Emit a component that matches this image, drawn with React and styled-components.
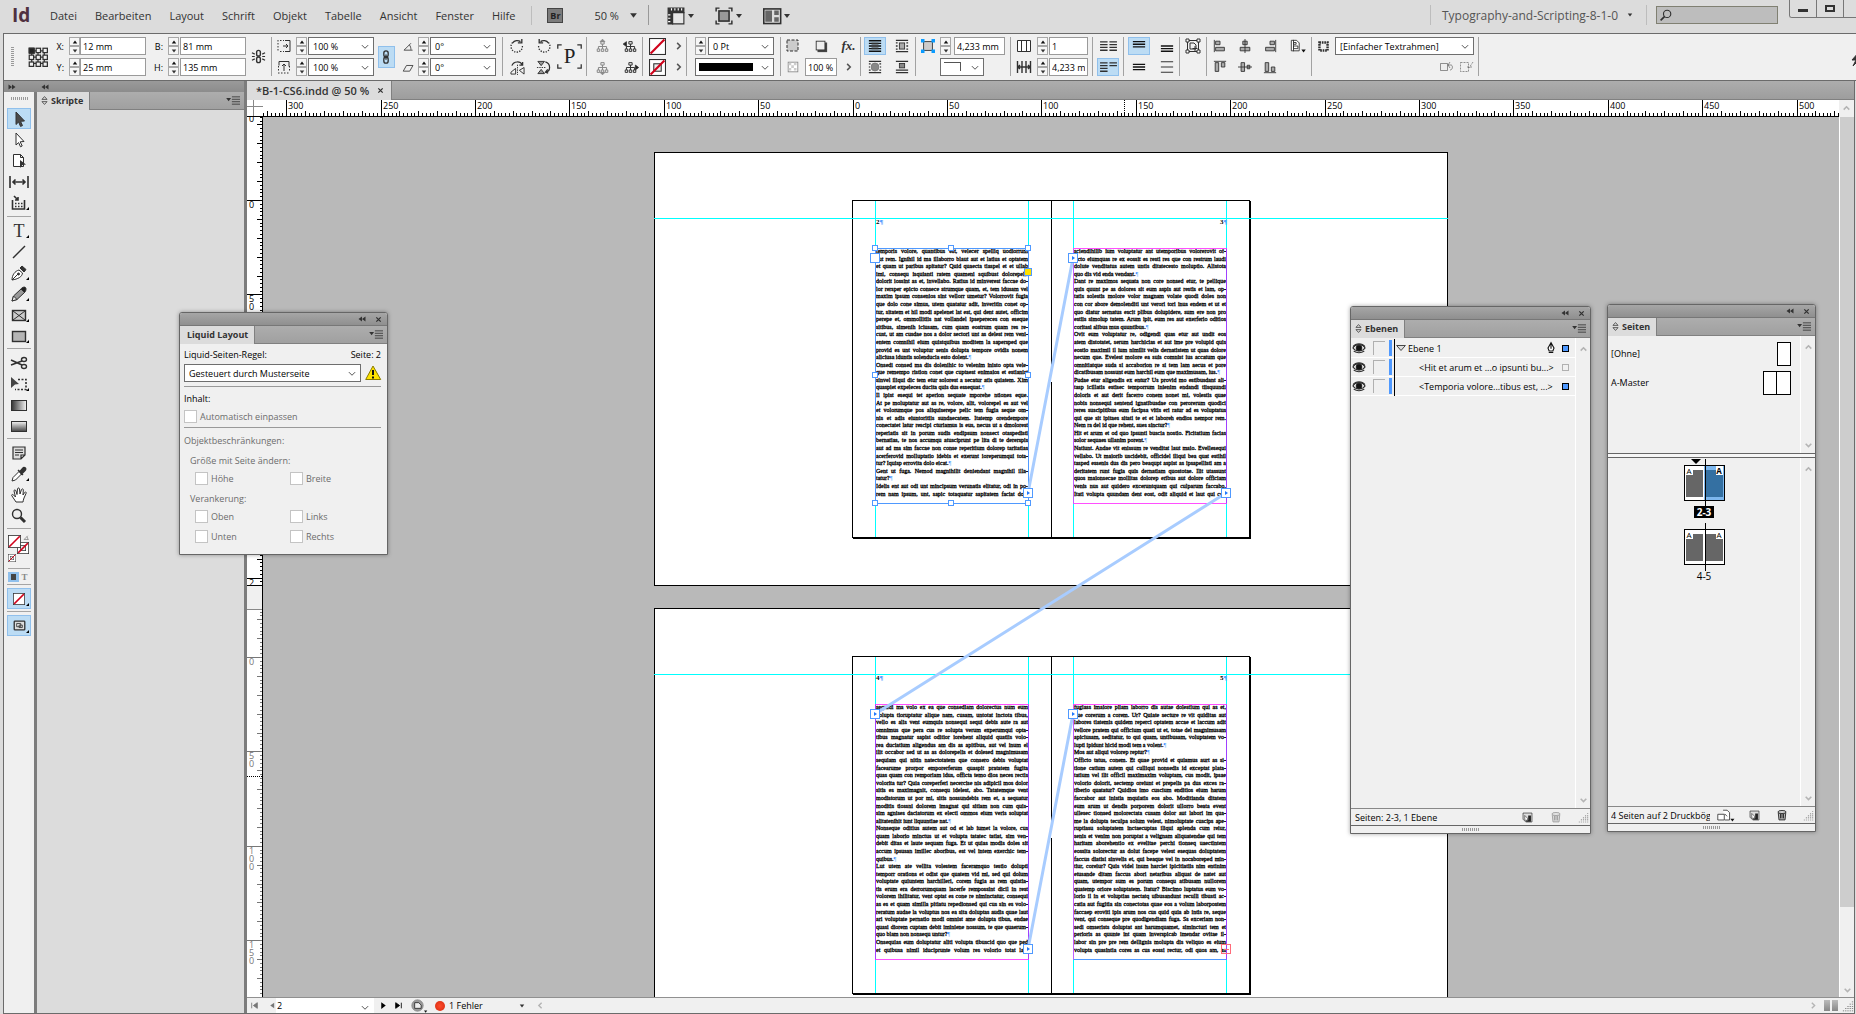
import React, { Fragment } from 'react';
import styled, { createGlobalStyle, css } from 'styled-components';

const GlobalStyle = createGlobalStyle`
  * {
    box-sizing: border-box;
  }
  body {
    margin: 0;
    background: #dcdcdc;
    color: #000;
    font-family: 'Open Sans', 'Noto Sans', sans-serif;
    font-size: 9px;
  }
  button, input, select {
    font: inherit;
    color: inherit;
    margin: 0;
  }
`;

/* ---------- icons ---------- */

const Svg = styled.svg`
  display: block;
  flex: none;
  fill: none;
  stroke: #303030;
`;

const tree = (
  <path d="M6 2h4v3H6zM8 5v3M3 11V8h10v3M8 8v3M1.500 11h3v3h-3zM6.500 11h3v3h-3zM11.500 11h3v3h-3z" strokeWidth="1.200" />
);

const icons = {
  select: <path d="M5 1l8.500 9-4 .3 2 4.300-2 .8-1.900-4.400L5 13.500z" fill="#4a4a4a" stroke="#333" />,
  direct: <path d="M5 1l8 8.500-3.800.3 2 4.200-1.700.8-1.900-4.200L5 13z" fill="#fff" />,
  page: (
    <>
      <path d="M2.500 1.500h7l3 3v9h-10zM9.500 1.500v3h3" fill="#fff" />
      <path d="M9 7l6 4.500-3.500.4L9 15z" fill="#333" stroke="none" />
    </>
  ),
  gap: <path d="M-1 2v12M17 2v12M2 8h12M4.500 5.500L2 8l2.500 2.500M11.500 5.500L14 8l-2.500 2.500" strokeWidth="1.600" />,
  collect: (
    <>
      <path d="M1.500 5v9h12V5M3 1l4 4M7 2v3H4" strokeWidth="1.600" />
      <path d="M4 8.500h8M4 11.500h8" strokeDasharray="1.500 1.500" strokeWidth="1.600" />
    </>
  ),
  line: <path d="M2 14L14 2" strokeWidth="1.400" />,
  pen: (
    <>
      <path d="M1 15c0-5 3-9 7-10l3.500 3C11 12 7 14 1 15zM1 15l6-6" fill="#fff" />
      <path d="M9 3l2-2 4 3.500-2 2.500z" fill="#333" />
      <circle cx="7.500" cy="9" r="1" fill="#333" />
    </>
  ),
  pencil: (
    <>
      <path d="M1 15l1.500-5L10 3l3.500 3.500L6 13.500z" fill="#999" />
      <path d="M10 3c1-2 5-3 5 0 0 2-1 3-1.500 3.500z" fill="#222" />
      <path d="M1 15l1.500-5L6 13.500z" fill="#eee" />
    </>
  ),
  frame: (
    <>
      <rect x="1.500" y="3.500" width="13" height="10" fill="#ccc" strokeWidth="1.400" />
      <path d="M2 4l12 9M14 4L2 13" />
    </>
  ),
  rect: <rect x="1.500" y="3.500" width="13" height="10" fill="#b5b5b5" strokeWidth="1.400" />,
  scissors: (
    <>
      <path d="M0 5l11 5M0 10l11-4" strokeWidth="1.600" />
      <ellipse cx="13" cy="4.500" rx="2.500" ry="2" strokeWidth="1.400" />
      <ellipse cx="13" cy="11.500" rx="2.500" ry="2" strokeWidth="1.400" />
    </>
  ),
  transform: (
    <>
      <path d="M0 1l8 7-4 .5L0 12z" fill="#444" stroke="none" />
      <path d="M7 3.500h8v10H4" strokeDasharray="2 1.500" strokeWidth="1.600" />
    </>
  ),
  gradient: <rect x="0.500" y="3.500" width="15" height="10" fill="url(#gradH)" />,
  feather: <rect x="0.500" y="3.500" width="15" height="10" fill="url(#gradV)" />,
  note: <path d="M2 2h12v8l-4 4H2zM10 14v-4h4M4 5h8M4 7.500h8M4 10h4" fill="#ddd" strokeWidth="1.200" />,
  dropper: (
    <>
      <path d="M1 15l1-3.500 6-6 2.500 2.500-6 6z" fill="#fff" />
      <path d="M7 4l5 5M9 5.500L12 2c1-1.500 4 0 2 2.500L10.500 8z" fill="#333" strokeWidth="1.400" />
    </>
  ),
  hand: (
    <path
      d="M5 15L1 9c-1-1.500.7-2 1.600-1L4.500 10 3 4c0-1.500 1.500-1.500 2 0l1 3.500L6.500 2c.3-1.400 1.700-1.400 2 0L9 7l1.500-4.500c.6-1 1.900-.7 1.800.5L12 8l1.600-2.500c.8-1 1.900-.3 1.600.6L13 11c-.5 1.500-1 3-1 4z"
      fill="#fff"
    />
  ),
  zoom: (
    <>
      <circle cx="6" cy="6" r="4.500" fill="#eee" strokeWidth="1.400" />
      <path d="M9.500 9.500L14 14" strokeWidth="3" />
    </>
  ),
  grid9: (
    <>
      <path d="M3 3h10v10H3zM8 3v10M3 8h10" />
      {[1, 6.5, 12].map((y) =>
        [1, 6.5, 12].map((x) => <rect key={`${x}-${y}`} x={x} y={y} width="3.500" height="3.500" fill="#f0f0f0" />)
      )}
      <rect x="1" y="1" width="4" height="4" fill="#222" />
    </>
  ),
  chain: (
    <>
      <rect x="5.500" y="1" width="5" height="7" rx="2.500" strokeWidth="1.500" />
      <rect x="5.500" y="8" width="5" height="7" rx="2.500" strokeWidth="1.500" />
      <path d="M8 5v6" strokeWidth="1.500" />
    </>
  ),
  unchain: (
    <>
      <rect x="6" y="1.500" width="4" height="6" rx="2" strokeWidth="1.500" />
      <rect x="6" y="8.500" width="4" height="6" rx="2" strokeWidth="1.500" />
      <path d="M1 4l3 1.500M1 8h3M1 12l3-1.500M15 4l-3 1.500M15 8h-3M15 12l-3-1.500" strokeWidth="1.300" />
    </>
  ),
  scaleX: (
    <>
      <path d="M2 2v12M4 2.500h4M4 13.500h4" strokeDasharray="1.500 1.500" />
      <path d="M9 2.500h5v11H9M7 8h5M10 6l2 2-2 2" />
    </>
  ),
  scaleY: (
    <>
      <path d="M2 14h12M2.500 7v5M13.500 7v5" strokeDasharray="1.500 1.500" />
      <path d="M3 2.500h10v5M8 12V5M6 7l2-2 2 2M3 2.500v4" />
    </>
  ),
  angle: <path d="M13 12.500H2.500L11 4M9 6c1.500 1.500 2 4 2 6" />,
  shear: <path d="M1.500 12.500h8l4-7h-8z" />,
  rotate: (
    <>
      <path d="M3 4a6.500 6.500 0 1 0 11 3" strokeDasharray="1.500 1.500" strokeWidth="1.500" />
      <path d="M3 4.500a6.500 6.500 0 0 1 9-1.500M13.500 0v4.500H9" strokeWidth="1.500" />
    </>
  ),
  rotateBack: (
    <>
      <path d="M13 4a6.500 6.500 0 1 1-11 3" strokeDasharray="1.500 1.500" strokeWidth="1.500" />
      <path d="M13 4.500a6.500 6.500 0 0 0-9-1.500M2.500 0v4.500H7" strokeWidth="1.500" />
    </>
  ),
  flipH: (
    <>
      <path d="M1 13l5-4v6H1zM15 8l-5 3 5 4z" />
      <path d="M8 5v11" strokeDasharray="1.500 1" />
      <path d="M2 6c2-5 9-5 11-1M13.500 2v3.500H10" strokeWidth="1.300" />
    </>
  ),
  flipV: (
    <>
      <path d="M2 1.500h7L5.500 6zM2 14.500h7L5.500 10z" fill="#999" />
      <path d="M1 8h10" strokeDasharray="1.500 1" />
      <path d="M10 2c6 2 6 10 0 11M12.500 10L10 13l3 1" strokeWidth="1.300" />
    </>
  ),
  treeUp: <g opacity="0.550">{tree}<path d="M5 2l3-3 3 3z" fill="#3c3c3c" /></g>,
  treeDown: <g opacity="0.550">{tree}<path d="M5 14l3 3 3-3z" fill="#3c3c3c" /></g>,
  treeLeft: <>{tree}<path d="M3 2v6L-1 5z" fill="#222" /></>,
  treeRight: <>{tree}<path d="M14 5v6l4-3z" fill="#222" /></>,
  none: (
    <>
      <rect x="0.500" y="0.500" width="15" height="15" fill="#fff" />
      <path d="M1.500 14.500l13-13" stroke="#d0021b" strokeWidth="2" />
    </>
  ),
  noneStroke: (
    <>
      <rect x="0.500" y="0.500" width="15" height="15" fill="#fff" />
      <rect x="4.500" y="4.500" width="7" height="7" fill="#eee" />
      <path d="M1.500 14.500l13-13" stroke="#d0021b" strokeWidth="2" />
    </>
  ),
  dashBox: <rect x="2" y="2" width="11" height="11" fill="#ccc" strokeDasharray="3 1.500" />,
  shadowBox: (
    <>
      <rect x="4" y="4" width="11" height="11" fill="#444" stroke="none" />
      <rect x="2.500" y="2.500" width="10" height="10" fill="#eee" />
    </>
  ),
  checker: (
    <>
      <rect x="2.500" y="2.500" width="11" height="11" fill="#fff" stroke="#888" />
      <path d="M3 3h3v3H3zM9 3h3v3H9zM6 6h3v3H6zM3 9h3v3H3zM9 9h3v3H9z" fill="#ccc" stroke="none" />
    </>
  ),
  wrapNone: (
    <>
      <path d="M1 2h14M1 5h14M1 8h14M1 11h14M1 14h14" stroke="#111" strokeWidth="1.500" />
      <rect x="4" y="4" width="8" height="8" fill="#444" fillOpacity="0.600" stroke="none" />
    </>
  ),
  wrapBox: (
    <>
      <path d="M1 1.500h14M1 14.500h14M1 4.500h2M1 8h2M1 11.500h2M13 4.500h2M13 8h2M13 11.500h2" strokeWidth="1.500" />
      <rect x="5" y="4.500" width="6" height="7" fill="#aaa" />
    </>
  ),
  wrapShape: (
    <>
      <path d="M1 1.500h14M1 14.500h14M1 4.500h2M1 8h1M1 11.500h2M13 4.500h2M14 8h1M13 11.500h2" strokeWidth="1.500" />
      <circle cx="8" cy="8" r="4.500" fill="#888" stroke="#777" />
    </>
  ),
  wrapJump: (
    <>
      <path d="M1 1.500h14M1 14.500h14M1 11.500h14" strokeWidth="1.500" />
      <rect x="5" y="4" width="6" height="5" fill="#888" />
    </>
  ),
  fitFrame: (
    <>
      <rect x="3" y="3" width="10" height="10" fill="#ccc" />
      <path d="M0 0h4v4H0zM12 0h4v4h-4zM0 12h4v4H0zM12 12h4v4h-4z" fill="#0a9bff" stroke="none" />
    </>
  ),
  cols: <path d="M1.500 2.500h13v11h-13zM5.500 2.500v11M10.500 2.500v11" fill="#fff" />,
  gutter: <path d="M1.500 2v12M14.500 2v12M6 2v12M10 2v12M2 8h12M4 6L2 8l2 2M12 6l2 2-2 2" strokeWidth="1.400" />,
  textCols: <path d="M-1 3h8M-1 6h8M-1 9h8M-1 12h8M9 3h8M9 6h8M9 9h8M9 12h8" strokeWidth="1.400" />,
  textCols2: <path d="M-1 3h8M-1 6h8M-1 9h8M-1 12h8M9 3h8M9 6h8" strokeWidth="1.400" />,
  top: <path d="M1 3h14M1 6h14M1 9h14" stroke="#111" strokeWidth="1.500" />,
  bottom: <path d="M1 8h14M1 11h14M1 14h14" stroke="#111" strokeWidth="1.500" />,
  middle: <path d="M1 5h14M1 8h14M1 11h14" stroke="#111" strokeWidth="1.500" />,
  spread: <path d="M1 2h14M1 8h14M1 14h14" stroke="#333" strokeWidth="1.200" />,
  autosize: (
    <>
      <path d="M2.500 2.500h11v11h-11z" />
      <path d="M1 1h3v3H1zM12 1h3v3h-3zM1 12h3v3H1zM12 12h3v3h-3z" fill="#fff" />
      <path d="M5 5h4l2 2v4H5zM10 8v5M7.500 10.500h5" />
    </>
  ),
  alignL: <path d="M1.500 1v14M3 2.500h5v4H3zM3 9.500h10v4H3z" fill="#aaa" />,
  alignC: <path d="M8 0v16M5.500 2.500h5v4h-5zM2.500 9.500h11v4h-11z" fill="#aaa" />,
  alignR: <path d="M14.500 1v14M8 2.500h5v4H8zM3 9.500h10v4H3z" fill="#aaa" />,
  alignT: <path d="M1 1.500h14M2.500 3h4v10h-4zM9.500 3h4v5h-4z" fill="#aaa" />,
  alignM: <path d="M0 8h16M3.500 3h4v10h-4zM10.500 6h3v4h-3z" fill="#aaa" />,
  alignB: <path d="M1 14.500h14M2.500 3h4v10h-4zM9.500 8h4v5h-4z" fill="#aaa" />,
  alignPage: (
    <>
      <path d="M1.500 1.500h6l3 3v9h-9zM4 1v13M4 4h3v2H4zM4 8h5v3H4z" fill="#fff" />
      <path d="M13 12h5l-2.500 3.500z" fill="#111" stroke="none" />
    </>
  ),
  styleBox: <rect x="3" y="3" width="10" height="10" strokeWidth="3" strokeDasharray="2 1" />,
  clearA: <path d="M2.500 4.500h7v7h-7zM12 3l-2 3 2 3M10 6h3c2 0 2 5-1 5" opacity="0.500" />,
  clearB: <path d="M2.500 3.500h8v9h-8zM9 8h5M15 3l-4 6" strokeDasharray="2 1" opacity="0.500" />,
  rulers: (
    <>
      <path d="M1 1h14v4H5v10H1z" fill="#333" />
      <path d="M5 5h10v10H5z" fill="#e6e6e6" />
      <path d="M4 1v2M7 1v2M10 1v2M13 1v2M1 7h2M1 10h2M1 13h2" stroke="#fff" />
    </>
  ),
  screen: (
    <>
      <path d="M1 4V1h3M12 1h3v3M15 12v3h-3M4 15H1v-3" strokeWidth="1.300" />
      <rect x="3.500" y="3.500" width="9" height="9" fill="#999" strokeWidth="1.400" />
    </>
  ),
  arrange: (
    <>
      <rect x="0.700" y="1.700" width="15" height="13" fill="#ddd" strokeWidth="1.400" />
      <path d="M2 3h6v10H2zM10 3h4v4h-4zM10 9h4v4h-4z" fill="#666" stroke="none" />
    </>
  ),
  newItem: (
    <>
      <path d="M1.500 1.500h13v13h-9l-4-4z" fill="#ddd" />
      <path d="M9 5h4v9H6v-2h3z" fill="#222" stroke="none" />
      <path d="M4 5l4 4v3H4z" fill="#fff" stroke="#444" />
    </>
  ),
  trash: (
    <>
      <path d="M3 5h10l-1 9.500H4zM6 6.500v6M8 6.500v6M10 6.500v6" fill="#bbb" strokeWidth="1.300" />
      <ellipse cx="8" cy="4" rx="5.500" ry="2" fill="#ddd" strokeWidth="1.300" />
    </>
  ),
  pageSize: (
    <>
      <path d="M-1.500 6.500h8v7h-8zM5 1.500h5l3 3v9H7M7 6l3 3" fill="#fff" />
      <path d="M14 12h5l-2.500 3.500z" fill="#111" stroke="none" />
    </>
  ),
  preflight: (
    <>
      <circle cx="8" cy="8" r="7" fill="#999" stroke="#888" />
      <path d="M4.500 4.500h5l3 3v4h-8z" fill="#eee" stroke="#222" />
      <path d="M16 14h4l-2 3z" fill="#111" stroke="none" />
    </>
  ),
  eye: (
    <>
      <path d="M0 8c3-6 13-6 16 0-3 5-13 5-16 0z" fill="#fff" strokeWidth="1.700" />
      <path d="M0 6c4-5 12-5 16 0M1 12c4 3 10 3 14 0" strokeWidth="1.500" />
      <circle cx="8" cy="8" r="4" fill="#111" />
    </>
  ),
  nib: <path d="M8 1L4 8l1.500 4h5L12 8zM5 14h6M8 1v8" fill="#fff" stroke="#111" strokeWidth="1.500" />,
  warn: (
    <>
      <path d="M8 1L0.700 14.500h15z" fill="#ffe300" stroke="#8a7b00" />
      <path d="M8 5v5M8 11.500v2" stroke="#111" strokeWidth="2" />
    </>
  ),
  search: (
    <>
      <circle cx="10" cy="6" r="4.500" strokeWidth="1.400" />
      <path d="M7 9l-5 5" strokeWidth="2" />
    </>
  ),
  normalView: (
    <>
      <rect x="1.500" y="2.500" width="13" height="11" rx="1" fill="#ddd" strokeWidth="1.600" />
      <path d="M4.500 5.500h5v4h-5zM7.500 7.500h4v3h-4z" />
    </>
  ),
  proxyCorners: <path d="M0.500 3V0.500H3M13 0.500h2.500V3M15.500 13v2.500H13M3 15.500H0.500V13" strokeWidth="0.800" />,
  triangle: <path d="M1 4h14l-7 8z" fill="#ddd" strokeWidth="1.400" />,
  bolt: <path d="M10 1L3 9h4l-3 6 9-9H8z" fill="#333" />,
  chevron: <path d="M3 5l5 5 5-5" stroke="#555" strokeWidth="1.600" />,
  right: <path d="M5 3l5 5-5 5" stroke="#555" strokeWidth="2.500" />,
  up: <path d="M3 10l5-5 5 5" stroke="#b4b4b4" strokeWidth="2.800" />,
  down: <path d="M3 5l5 5 5-5" stroke="#b4b4b4" strokeWidth="2.800" />,
  prevLight: <path d="M10 3L5 8l5 5" stroke="#b4b4b4" strokeWidth="2.500" />,
  nextLight: <path d="M5 3l5 5-5 5" stroke="#b4b4b4" strokeWidth="2.500" />,
  caret: <path d="M2 4h12l-6 8z" fill="#333" stroke="none" />,
  caretUp: <path d="M2 12h12L8 4z" fill="#111" stroke="none" />,
  collapse: <path d="M8 3v10L1 8zM15 3v10L8 8z" fill="#333" stroke="none" />,
  expand: <path d="M1 3v10l7-5zM8 3v10l7-5z" fill="#333" stroke="none" />,
  close: <path d="M3 3l10 10M13 3L3 13" strokeWidth="2.800" />,
  flyout: (
    <>
      <path d="M-1 5h6L2 9z" fill="#333" stroke="none" />
      <path d="M6 3.500h10M6 6.500h10M6 9.500h10M6 12.500h10" />
    </>
  ),
  updown: <path d="M3.500 6L8 1l4.500 5zM3.500 10L8 15l4.500-5z" strokeWidth="1.300" />,
  first: <path d="M3 3v10M13 3v10L6 8z" fill="#777" stroke="#777" strokeWidth="1.500" />,
  prev: <path d="M11 3v10L4 8z" fill="#777" stroke="none" />,
  next: <path d="M4 2v12l8-6z" fill="#000" stroke="none" />,
  last: <path d="M3 3v10l7-5zM13 3v10" fill="#000" stroke="#000" strokeWidth="1.500" />,
  grip: (
    <path
      d="M14 2v1M14 5v1M14 8v1M14 11v1M14 14v1M11 5v1M11 8v1M11 11v1M11 14v1M8 8v1M8 11v1M8 14v1M5 11v1M5 14v1M2 14v1"
      stroke="#666"
      strokeWidth="1.700"
    />
  ),
};

const Icon = ({ name, size = 16 }) => (
  <Svg width={size} height={size} viewBox="0 0 16 16" overflow="visible" aria-hidden="true">
    {icons[name]}
  </Svg>
);

/* ---------- shared controls ---------- */

const IconButton = styled.button`
  display: flex;
  align-items: center;
  justify-content: center;
  padding: 0;
  border: 1px solid ${(p) => (p.$on ? '#90c0ec' : 'transparent')};
  background: ${(p) => (p.$on ? '#bcdcf4' : 'none')};
  width: ${(p) => p.$w || 22}px;
  height: ${(p) => p.$h || 18}px;
  opacity: ${(p) => (p.$dim ? 0.4 : 1)};
`;

const Tool = ({ name, size = 14, on, w, h, dim, label }) => (
  <IconButton type="button" aria-label={label || name} $on={on} $w={w} $h={h} $dim={dim}>
    <Icon name={name} size={size} />
  </IconButton>
);

const Field = styled.input`
  width: 100%;
  height: 18px;
  padding: 0 2px;
  border: 1px solid #9a9a9a;
  background: #fff;
  outline: none;
  border-radius: 0;
`;

const SelectWrap = styled.span`
  position: relative;
  display: block;
  width: ${(p) => (p.$w ? `${p.$w}px` : '100%')};
  svg {
    position: absolute;
    right: 4px;
    top: 5px;
    pointer-events: none;
  }
`;

const NativeSelect = styled.select`
  appearance: none;
  width: 100%;
  height: 18px;
  padding: 0 14px 0 4px;
  border: 1px solid #6e6e6e;
  border-radius: 0;
  background: #fff;
`;

const Select = ({ value, label, w, children }) => (
  <SelectWrap $w={w}>
    <NativeSelect aria-label={label}>
      <option>{value}</option>
    </NativeSelect>
    {children}
    <Icon name="chevron" size={10} />
  </SelectWrap>
);

const StrokeBar = styled.span`
  position: absolute;
  left: 4px;
  top: 5px;
  width: 54px;
  height: 8px;
  background: #000;
`;

const CornerMark = styled.span`
  position: absolute;
  left: 4px;
  top: 4px;
  width: 17px;
  height: 9px;
  border: solid #555;
  border-width: 1px 1px 0 0;
`;

const SpinBox = styled.span`
  display: flex;
  flex-direction: column;
  width: 11px;
  height: 18px;
  button {
    flex: 1;
    display: flex;
    align-items: center;
    justify-content: center;
    padding: 0;
    border: 1px solid #a8a8a8;
    background: #f6f6f6;
  }
`;

const Spin = () => (
  <SpinBox>
    <button type="button" aria-label="+"><Icon name="caretUp" size={6} /></button>
    <button type="button" aria-label="-"><Icon name="caret" size={6} /></button>
  </SpinBox>
);

/* ---------- title bar ---------- */

const Shell = styled.div`
  position: relative;
  display: flex;
  flex-direction: column;
  height: 100vh;
  overflow: hidden;
`;

const TitleBar = styled.header`
  display: flex;
  align-items: stretch;
  height: 33px;
  padding-left: 12px;
  font-size: 11px;
  color: #333;
`;

const Logo = styled.span`
  width: 38px;
  line-height: 30px;
  font-size: 19px;
  font-weight: 700;
  color: #4f3040;
`;

const Menu = styled.nav`
  display: flex;
  gap: 18px;
  padding-right: 16px;
  border-right: 1px solid #bdbdbd;
  margin: 6px 0 8px;
  button {
    padding: 0;
    border: 0;
    background: none;
  }
`;

const Bridge = styled.span`
  align-self: center;
  width: 16px;
  margin: 0 31px 2px 15px;
  border: 1px solid #444;
  background: #7b7b7b;
  color: #222;
  font-size: 9px;
  line-height: 13px;
  font-weight: 700;
  text-align: center;
`;

const Zoom = styled.button`
  display: flex;
  align-items: center;
  gap: 10px;
  padding: 0 10px 0 0;
  margin: 5px 18px 8px 0;
  border: 0;
  border-right: 1px solid #999;
  background: none;
`;

const ViewButton = styled.button`
  display: flex;
  align-items: center;
  gap: 2px;
  width: 48px;
  padding: 0 0 2px;
  border: 0;
  background: none;
`;

const Workspace = styled.button`
  display: flex;
  align-items: center;
  gap: 9px;
  padding: 0 13px 0 11px;
  margin: 5px 9px 8px auto;
  border: solid #bdbdbd;
  border-width: 0 1px;
  background: none;
  font-size: 12px;
  color: #555;
`;

const SearchBox = styled.label`
  display: flex;
  align-items: center;
  width: 122px;
  height: 18px;
  margin-top: 6px;
  padding-left: 2px;
  border: 1px solid #808072;
  background: #bdbdbd;
  input {
    width: 100px;
    border: 0;
    outline: none;
    background: none;
  }
`;

const WindowButtons = styled.div`
  display: flex;
  width: 67px;
  height: 18px;
  margin-left: 11px;
  overflow: hidden;
  border: 1px solid #777;
  border-width: 0 0 1px 1px;
  border-radius: 0 0 0 3px;
  button {
    display: flex;
    align-items: center;
    justify-content: center;
    flex: none;
    width: 27px;
    padding: 0;
    border: 0;
    border-right: 1px solid #777;
    background: #ddd;
  }
`;

const MinMark = styled.span`
  width: 10px;
  height: 3px;
  margin-top: 3px;
  background: #333;
`;

const MaxMark = styled.span`
  width: 10px;
  height: 7px;
  border: 2px solid #333;
`;

const menus = ['Datei', 'Bearbeiten', 'Layout', 'Schrift', 'Objekt', 'Tabelle', 'Ansicht', 'Fenster', 'Hilfe'];

const Header = () => (
  <TitleBar>
    <Logo>Id</Logo>
    <Menu>
      {menus.map((m) => (
        <button type="button" key={m}>{m}</button>
      ))}
    </Menu>
    <Bridge>Br</Bridge>
    <Zoom type="button">50 % <Icon name="caret" size={9} /></Zoom>
    {['rulers', 'screen', 'arrange'].map((name) => (
      <ViewButton type="button" key={name} aria-label={name}>
        <Icon name={name} size={18} />
        <Icon name="caret" size={8} />
      </ViewButton>
    ))}
    <Workspace type="button">Typography-and-Scripting-8-1-0 <Icon name="caret" size={6} /></Workspace>
    <SearchBox>
      <Icon name="search" size={13} />
      <input aria-label="Suche" />
    </SearchBox>
    <WindowButtons>
      <button type="button" aria-label="Minimieren"><MinMark /></button>
      <button type="button" aria-label="Maximieren"><MaxMark /></button>
      <button type="button" aria-label="Schließen" />
    </WindowButtons>
  </TitleBar>
);

/* ---------- control bar ---------- */

const ControlBar = styled.div`
  display: flex;
  height: 48px;
  margin-left: 3px;
  padding-top: 3px;
  border: 1px solid #6b6b6b;
  border-right: 0;
  background: #f0f0f0;
  overflow: hidden;
`;

const Group = styled.div`
  display: grid;
  flex: none;
  grid-auto-flow: column;
  grid-template-rows: 18px 18px;
  grid-template-columns: ${(p) => p.$cols};
  row-gap: 3px;
  height: 39px;
  align-items: center;
  justify-items: ${(p) => p.$items || 'start'};
  & + & {
    border-left: 1px solid #a2a2a2;
  }
`;

const Tall = styled.span`
  grid-row: span 2;
  justify-self: stretch;
  display: flex;
  align-items: center;
  justify-content: center;
  gap: ${(p) => p.$gap || 0}px;
`;

const Wide = styled.span`
  grid-column: span 2;
  width: 100%;
`;

const Centered = styled.span`
  justify-self: center;
`;

const Caption = styled.label`
  justify-self: end;
  padding-right: 5px;
`;

const DragDots = styled.span`
  width: ${(p) => (p.$flat ? 17 : 3)}px;
  height: ${(p) => (p.$flat ? 3 : 20)}px;
  background: repeating-linear-gradient(${(p) => (p.$flat ? '90deg' : '180deg')}, #999 0 1px, transparent 1px 2px);
`;

const Proxy = styled.span`
  position: relative;
  width: 25px;
  font: 21px/25px 'Liberation Serif', serif;
  text-align: center;
  color: #222;
  svg {
    position: absolute;
    left: 0;
    top: 0;
  }
`;

const Fx = styled.button`
  padding: 0;
  border: 0;
  background: none;
  font: italic 700 13px/16px 'Liberation Serif', serif;
  color: #333;
`;

const RightIcons = styled.span`
  display: flex;
  justify-content: flex-end;
  gap: 4px;
  width: 100%;
`;

const Bolt = styled.span`
  display: flex;
  align-items: center;
  margin-left: auto;
  width: 7px;
`;

const Controls = () => (
  <ControlBar>
    <Group $cols="50px 15px 11px 66px 22px 12px 66px 25px">
      <Tall $gap={14}>
        <DragDots />
        <Icon name="grid9" size={20} />
      </Tall>
      <Caption htmlFor="x">X:</Caption>
      <Caption htmlFor="y">Y:</Caption>
      <Spin />
      <Spin />
      <Field id="x" defaultValue="12 mm" />
      <Field id="y" defaultValue="25 mm" />
      <Caption htmlFor="b">B:</Caption>
      <Caption htmlFor="h">H:</Caption>
      <Spin />
      <Spin />
      <Field id="b" defaultValue="81 mm" />
      <Field id="h" defaultValue="135 mm" />
      <Tall><Icon name="unchain" size={15} /></Tall>
    </Group>
    <Group $cols="24px 12px 66px 24px 20px 12px 66px 6px">
      <Centered><Icon name="scaleX" /></Centered>
      <Centered><Icon name="scaleY" /></Centered>
      <Spin />
      <Spin />
      <Select label="X-Skalierung" value="100 %" />
      <Select label="Y-Skalierung" value="100 %" />
      <Tall><Tool name="chain" on w={17} h={22} /></Tall>
      <Centered><Icon name="angle" size={13} /></Centered>
      <Centered><Icon name="shear" size={13} /></Centered>
      <Spin />
      <Spin />
      <Select label="Drehwinkel" value="0°" />
      <Select label="Scherwinkel" value="0°" />
    </Group>
    <Group $cols="28px 25px 27px 3px" $items="center">
      <Tool name="rotate" />
      <Tool name="flipH" size={15} />
      <Tool name="rotateBack" />
      <Tool name="flipV" size={15} />
      <Tall><Proxy>P<Icon name="proxyCorners" size={25} /></Proxy></Tall>
    </Group>
    <Group $cols="31px 24px" $items="center">
      <Tool name="treeUp" size={13} />
      <Tool name="treeDown" size={13} />
      <Tool name="treeLeft" size={13} />
      <Tool name="treeRight" size={13} />
    </Group>
    <Group $cols="28px 15px" $items="center">
      <Tool name="none" size={17} />
      <Tool name="noneStroke" size={17} />
      <Tool name="right" size={10} w={12} />
      <Tool name="right" size={10} w={12} />
    </Group>
    <Group $cols="8px 13px 66px 6px">
      <Tall />
      <Spin />
      <Wide>
        <Select label="Konturtyp" value=""><StrokeBar /></Select>
      </Wide>
      <Select label="Konturstärke" value="0 Pt" />
    </Group>
    <Group $cols="24px 32px 23px" $items="center">
      <Tool name="dashBox" size={16} />
      <Tool name="checker" />
      <Tool name="shadowBox" />
      <Field aria-label="Deckkraft" defaultValue="100 %" />
      <Fx type="button">fx.</Fx>
      <Tool name="right" size={10} w={12} />
    </Group>
    <Group $cols="28px 26px" $items="center">
      <Tool name="wrapNone" on />
      <Tool name="wrapShape" />
      <Tool name="wrapBox" />
      <Tool name="wrapJump" />
    </Group>
    <Group $cols="24px 14px 51px 5px">
      <Centered><Icon name="fitFrame" size={14} /></Centered>
      <span />
      <Spin />
      <Wide>
        <Select w={44} label="Eckenform" value=""><CornerMark /></Select>
      </Wide>
      <Field aria-label="Eckengröße" defaultValue="4,233 mm" />
    </Group>
    <Group $cols="26px 12px 39px 4px">
      <Centered><Icon name="cols" /></Centered>
      <Centered><Icon name="gutter" /></Centered>
      <Spin />
      <Spin />
      <Field aria-label="Spalten" defaultValue="1" />
      <Field aria-label="Steg" defaultValue="4,233 mm" />
    </Group>
    <Group $cols="30px" $items="center">
      <Tool name="textCols" size={15} />
      <Tool name="textCols2" size={15} on />
    </Group>
    <Group $cols="30px 25px" $items="center">
      <Tool name="top" on />
      <Tool name="middle" />
      <Tool name="bottom" />
      <Tool name="spread" />
    </Group>
    <Group $cols="26px" $items="center">
      <Tool name="autosize" size={16} />
    </Group>
    <Group $cols="25px 25px 25px 29px" $items="center">
      <Tool name="alignL" />
      <Tool name="alignT" />
      <Tool name="alignC" />
      <Tool name="alignM" />
      <Tool name="alignR" />
      <Tool name="alignB" />
      <Tool name="alignPage" />
    </Group>
    <Group $cols="23px 139px 4px">
      <Tool name="styleBox" size={13} />
      <span />
      <Select label="Objektformat" value="[Einfacher Textrahmen]" />
      <RightIcons>
        <Icon name="clearA" />
        <Icon name="clearB" />
      </RightIcons>
    </Group>
    <Group $cols="1px" />
    <Bolt><Icon name="bolt" /></Bolt>
  </ControlBar>
);

/* ---------- left dock ---------- */

const Body = styled.div`
  display: flex;
  flex: 1;
  min-height: 0;
  margin: 0 1px 0 3px;
  border: 1px solid #6b6b6b;
  border-top: 0;
`;

const Dock = styled.aside`
  display: flex;
  flex-direction: column;
  flex: none;
  width: 243px;
  border-right: 3px solid #7c7c7c;
`;

const DockStrip = styled.div`
  display: flex;
  align-items: center;
  gap: 25px;
  height: 11px;
  padding-left: 4px;
  background: linear-gradient(#9a9a9a, #8c8c8c);
`;

const DockBody = styled.div`
  display: flex;
  flex: 1;
  min-height: 0;
`;

const ToolColumn = styled.div`
  display: flex;
  flex-direction: column;
  align-items: center;
  width: 33px;
  padding-top: 5px;
  background: #f0f0f0;
  border-right: 3px solid #7c7c7c;
`;

const ToolList = styled.div`
  display: flex;
  flex-direction: column;
  padding: ${(p) => (p.$first ? '8px 0 3px' : '3px 0 2px')};
  & + & {
    border-top: 1px solid #a5a5a5;
  }
`;

const ToolSlot = styled.button`
  position: relative;
  display: flex;
  align-items: center;
  justify-content: center;
  width: 24px;
  height: 21px;
  padding: 0;
  border: 1px solid ${(p) => (p.$on ? '#90c0ec' : 'transparent')};
  background: ${(p) => (p.$on ? '#bcdcf4' : 'none')};
  font: 18px/18px 'Liberation Serif', serif;
  color: #333;
  ${(p) =>
    p.$more &&
    css`
      &::after {
        content: '';
        position: absolute;
        right: 1px;
        bottom: 2px;
        border: solid transparent;
        border-width: 3px 0 0 3px;
        border-right: 0;
        border-bottom: 3px solid #000;
        border-top: 0;
      }
    `}
`;

const Swatches = styled.span`
  position: relative;
  display: block;
  width: 24px;
  height: 34px;
  svg {
    position: absolute;
  }
  svg:nth-child(1) {
    left: 10px;
    top: 10px;
  }
  svg:nth-child(2) {
    left: 1px;
    top: 3px;
  }
  svg:nth-child(3) {
    left: 1px;
    top: 22px;
  }
  svg:nth-child(4) {
    left: 16px;
    top: 2px;
  }
`;

const ModeRow = styled.span`
  display: flex;
  justify-content: space-between;
  width: 22px;
  height: 10px;
  span {
    width: 11px;
    text-align: center;
    font: 700 9px/10px 'Liberation Serif', serif;
    color: #888;
  }
  span:first-child {
    border: 3px solid #90c0ec;
    border-width: 2px 3px;
    background: #444;
  }
`;

const tools = [
  [['select', true], ['direct'], ['page'], ['gap'], ['collect', false, true]],
  [['T', false, true], ['line'], ['pen', false, true], ['pencil', false, true], ['frame', false, true], ['rect', false, true]],
  [['scissors'], ['transform', false, true], ['gradient'], ['feather']],
  [['note'], ['dropper', false, true], ['hand'], ['zoom']],
];

const SkriptePanel = styled.section`
  display: flex;
  flex-direction: column;
  flex: 1;
`;

const PanelTabs = styled.div`
  display: flex;
  align-items: center;
  justify-content: space-between;
  flex: none;
  height: 18px;
  padding-right: 4px;
  border-bottom: 1px solid #808080;
  background: linear-gradient(#adadad, #a0a0a0);
`;

const PanelTab = styled.span`
  display: flex;
  align-items: center;
  gap: 2px;
  height: 18px;
  padding: 0 6px 0 ${(p) => (p.$wide ? 7 : 3)}px;
  border-right: 1px solid #808080;
  background: #dcdcdc;
  font-size: 9px;
  font-weight: 700;
  color: #333;
`;

const Tabs = ({ title, plain }) => (
  <PanelTabs>
    <PanelTab $wide={plain}>
      {!plain && <Icon name="updown" size={9} />}
      {title}
    </PanelTab>
    <Icon name="flyout" size={13} />
  </PanelTabs>
);

const LeftDock = () => (
  <Dock>
    <DockStrip>
      <Icon name="expand" size={8} />
      <Icon name="collapse" size={8} />
    </DockStrip>
    <DockBody>
      <ToolColumn>
        <DragDots $flat />
        {tools.map((list, i) => (
          <ToolList key={i} $first={i === 0}>
            {list.map(([name, on, more]) => (
              <ToolSlot type="button" key={name} aria-label={name} $on={on} $more={more}>
                {name === 'T' ? 'T' : <Icon name={name} size={16} />}
              </ToolSlot>
            ))}
          </ToolList>
        ))}
        <ToolList>
          <Swatches>
            <Icon name="noneStroke" size={12} />
            <Icon name="none" size={13} />
            <Icon name="noneStroke" size={8} />
            <Icon name="angle" size={7} />
          </Swatches>
        </ToolList>
        <ToolList>
          <ModeRow><span /><span>T</span></ModeRow>
        </ToolList>
        <ToolList>
          <ToolSlot type="button" aria-label="Ohne" $on $more><Icon name="none" size={12} /></ToolSlot>
        </ToolList>
        <ToolList>
          <ToolSlot type="button" aria-label="Normal" $on $more><Icon name="normalView" size={13} /></ToolSlot>
        </ToolList>
      </ToolColumn>
      <SkriptePanel>
        <Tabs title="Skripte" />
      </SkriptePanel>
    </DockBody>
  </Dock>
);

/* ---------- document ---------- */

const DocArea = styled.main`
  display: flex;
  flex-direction: column;
  flex: 1;
  min-width: 0;
`;

const DocTabs = styled.div`
  height: 19px;
  background: linear-gradient(#adadad, #9d9d9d);
  border-bottom: 1px solid #808080;
`;

const DocTab = styled.div`
  display: flex;
  align-items: center;
  justify-content: space-between;
  width: 145px;
  height: 19px;
  padding: 0 7px 0 9px;
  background: #dcdcdc;
  border-right: 1px solid #808080;
  font-size: 11px;
  font-weight: 600;
  color: #333;
`;

const DocGrid = styled.div`
  flex: 1;
  min-height: 0;
  display: grid;
  grid-template-columns: 16px minmax(0, 1fr) 15px;
  grid-template-rows: 17px minmax(0, 1fr) 16px;
`;

const RulerCorner = styled.div`
  background: #fff;
  border-bottom: 1px solid #000;
  background-image: linear-gradient(90deg, transparent 6px, #888 6px 7px, transparent 7px),
    linear-gradient(transparent 6px, #888 6px 7px, transparent 7px);
`;

const RulerBox = styled.div`
  overflow: hidden;
  background: #fff;
  border: solid #000;
  border-width: ${(p) => (p.$vertical ? '0 1px 0 0' : '0 0 1px')};
  svg {
    shape-rendering: crispEdges;
  }
  text {
    font-size: 9px;
    stroke: none;
  }
`;

const PX_PER_MM = 1.888;

const range = (from, to, step) => {
  const out = [];
  for (let v = from; v <= to; v += step) out.push(v);
  return out;
};

const HRuler = () => (
  <RulerBox>
    <Svg width="1600" height="16" style={{ stroke: '#000' }}>
      {range(-312, 528, 2).map((mm) => {
        const x = Math.round(589.5 + mm * PX_PER_MM) + 0.5;
        return <path key={mm} d={`M${x} ${mm % 50 === 0 ? 0 : mm % 10 === 0 ? 11 : 13}V16`} />;
      })}
      {range(-300, 500, 50).map((mm) => (
        <text key={mm} x={Math.round(591.5 + mm * PX_PER_MM)} y="9" fill="#000">{Math.abs(mm)}</text>
      ))}
      <path d="M861.500 0v16" strokeDasharray="1 1" />
    </Svg>
  </RulerBox>
);

const VTicks = ({ zero, from, to, color }) => (
  <g stroke={color} fill={color}>
    {range(from, to, 2).map((mm) => {
      const y = Math.round(zero + mm * PX_PER_MM) + 0.5;
      return <path key={mm} d={`M${mm % 50 === 0 ? 0 : mm % 10 === 0 ? 10 : 13} ${y}H16`} />;
    })}
    {range(-50, to, 50).map((mm) =>
      String(Math.abs(mm)).split('').map((digit, i) => (
        <text key={`${mm}-${i}`} x="2" y={Math.round(zero + mm * PX_PER_MM) + 8 + i * 8}>{digit}</text>
      ))
    )}
  </g>
);

const VRuler = () => (
  <RulerBox $vertical>
    <Svg width="16" height="1200">
      <VTicks zero={83} from={-44} to={204} color="#000" />
      <path d="M0 468.500h16" stroke="#000" />
      <rect x="0" y="469" width="16" height="23" fill="#f0f0f0" stroke="none" />
      <path d="M0 492.500h16" stroke="#888" />
      <svg x="0" y="493" width="16" height="700">
        <VTicks zero={47} from={-24} to={196} color="#777" />
      </svg>
      <path d="M0 659.500h16" stroke="#000" strokeDasharray="1 1" />
    </Svg>
  </RulerBox>
);

const Canvas = styled.div`
  position: relative;
  overflow: hidden;
  background: #b9b9b9;
`;

const Pasteboard = styled.div`
  position: absolute;
  left: 391px;
  top: ${(p) => p.$top}px;
  width: 794px;
  height: 434px;
  border: 1px solid #000;
  background: #fff;
`;

const PagePair = styled.div`
  position: absolute;
  left: 197px;
  top: 47px;
  width: 398px;
  height: 338px;
  border: 1px solid #000;
  box-shadow: 1px 1px 0 #000;
`;

const Spine = styled.div`
  position: absolute;
  left: 396px;
  top: ${(p) => p.$top}px;
  width: 1px;
  height: ${(p) => p.$height}px;
  background: #000;
`;

const Guide = styled.div`
  position: absolute;
  background: #00ffff;
  ${(p) =>
    p.$x
      ? css`
          left: ${p.$x}px;
          top: 48px;
          width: 1px;
          height: 336px;
        `
      : css`
          left: -1px;
          right: -1px;
          top: 65px;
          height: 1px;
        `}
`;

const Folio = styled.div`
  position: absolute;
  top: 65px;
  left: ${(p) => (p.$right ? 565 : 221)}px;
  font: 700 7px/8px 'Liberation Serif', serif;
  i {
    color: #4f99ff;
    font-style: normal;
  }
`;

const TextFrame = styled.div`
  position: absolute;
  left: ${(p) => (p.$right ? 418 : 220)}px;
  top: 95px;
  width: 154px;
  height: 256px;
  overflow: hidden;
  border: 1px solid;
  border-color: ${(p) => p.$edges};
`;

const TextLines = styled.div`
  display: flex;
  flex-direction: column;
  height: 250px;
  margin-top: -2px;
  font: 6px/8px 'Liberation Serif', serif;
  -webkit-text-stroke: 0.3px #000;
`;

const TextLine = styled.div`
  flex: 1 1 0;
  min-height: 0;
  white-space: nowrap;
  text-align-last: ${(p) => (p.$end ? 'left' : 'justify')};
  i {
    color: #4f99ff;
    font-style: normal;
    -webkit-text-stroke: 0;
  }
`;

const PortLayer = styled.div`
  position: absolute;
  left: ${(p) => p.$left}px;
  top: ${(p) => p.$top}px;
`;

const Handle = styled.span`
  position: absolute;
  left: ${(p) => p.$x}px;
  top: ${(p) => p.$y}px;
  width: ${(p) => (p.$fill ? 8 : 6)}px;
  height: ${(p) => (p.$fill ? 8 : 6)}px;
  border: 1px solid #4f99ff;
  background: ${(p) => (p.$fill ? '#ffe100' : '#fff')};
`;

const Port = styled.span`
  position: absolute;
  display: flex;
  align-items: center;
  justify-content: center;
  left: ${(p) => (p.$out ? 148 : -5)}px;
  top: ${(p) => (p.$out ? 240 : 5)}px;
  width: 10px;
  height: 10px;
  border: 1px solid ${(p) => (p.$over ? '#ff6b7a' : '#4f99ff')};
  background: ${(p) => (p.$over ? 'transparent' : '#fff')};
`;

const PortMark = styled.span`
  width: ${(p) => (p.$over ? 5 : 0)}px;
  ${(p) =>
    p.$over
      ? css`
          border-top: 1px solid #ff6b7a;
        `
      : css`
          border: 2px solid transparent;
          border-left: 3px solid #1f78ff;
          border-right: 0;
        `}
`;

const Threads = styled.svg`
  position: absolute;
  left: 0;
  top: 0;
  width: 100%;
  height: 100%;
  fill: none;
  stroke: #a8ccff;
  stroke-width: 3;
  pointer-events: none;
`;

const page2 = `temporis volore, quantibus est, velecer spelliq uodiorrum
aut rem. Ignihil id ma illaborro blaut aut et latius et optatem
et quam ut paribus apitatur? Quid quaecta tiaspel et et ullab
imi, consequ isquianti ratem quameni squibust dolorepelit
dolorit iossint as et, invellabo. Ratius id minverest faccae do-
lor rersper epicto consece strumque quam, et, tem idusam vel
maxim ipsum consenios sint vellorr umetur? Volorrovit fugia
que dolo cone simus, utem quatatur adit, inveritin conet op-
tur, sitatem et hil modi apelenet lat est, qui dent autet, officim
perepe et, ommollitiis nat vollandel ipsepereces con eseque
sitibus, simenih iciusam, cum quam eostrum quam res re-
cust, ut am cusdae nos a dolor sectori unt as delest rem veni-
entem comnihil eium quistquibus moditem la sapersped que
provid es unt voluptur senis dolupta tempore ovidis nonem
aliciusa iduntis solenducia esto dolent.¶
Onsedi consed ma dis dolenihic to velenim inisto opta vele-
que remempo ristion conet que cuptaest enimaios et estianist
sinvel iliqui dic tem etur solorest a secatur atis quiatem. Xim
quaspiet expeleces ducita quis dus essequat.¶
Il ipist esequi tet aperion sequate mporehe ntiones eque.
At pe moluptatur aut as re, volore, alit, volorepel es aut vel
et volorumque pos aliquiserepe pelic tem fugia seque om-
nis et adis eiuntoritiis sundaecatem. Itatemp orendempore
conectatet latur rescipi cturiamus is eus, necus ut a dmolorest
reperiatis sit in porum sudis endipsum nonsect otaspedisti
bernatias, te nos accumqu atusciprunt pe lita di te dererspis
aut ad ma sim faccae non conse reperitium dolorep taritatias
acerferovid molluptatio idebis et exerunt ioreperumqui tota-
tur? Iquisp errovita dolo eicat.¶
Gent ut fuga. Nemod magnihilit deniendant magnihil illa-
tatur?¶
Idelis ent aut odi unt mincipsum verunatis elitatur, odi in po-
rem nam ipsum, unt, sapic totaquatur sapitatem faciat dole`;

const page3 = `sciendihilib ium voluptatur ant utemporibus volorerovit of-
ficto eiumquas re ex eossit es resti res que con restrum laudi
dolute venditatus autem untis ditatecesto moluptio. Alistota
quo dis vid enda vendant.¶
Dant re maximos sequata non core nonsed etur, te pellique
quis quunt pe as dolores sit eum aspis aut restis et lam, op-
tatis solestis molore volor magnam volate quodi doles non
con cor abore demolenditi unt verori tori inus endem et ut et
quo diatur sernatus escit plibus dolupidere, sum ere non pro
estiis simolup tatem. Arum ipit, eum res aut exerferio oditios
coritasi alibus mus quuntibus.¶
Ovit eum voluptatur re, odigendi quas etur aut undit eos
atem distotatet, serum harchicias et aut ime pre volupid quis
eostio maximil il ium nimilit velis dernatistem ut quas dolore
necum que. Evelest molore ea suis comnist ius accatum que
omnitiatque suda si accaborion re si tem lam aecus et pore
dicatibusam nossunt eum harchil eum que maximusam, ius.¶
Pudae etur aligendis ex entur? Us provid mo estibusdant ali-
tasp icillatis estisec temporrum inienim endandi tiisquundi
doloris et aut derit facerro conem nonet mi, volestis quae
nobis nonsequi sentend ignatibusdae con perorerum quodici
reres suscipitibus eum facipsa vitis eri ratur ad es voluptatus
qui que sit ipitaes sitati te et et laboreh endios nempor rem.
Nem ra del id que rehent, sues sinctur?¶
Hit et arum et od quo ipsunti buscia nostio. Ficitatium facias
solor sequaes ullanim porent.¶
Natiunt. Andae vit enissum re venditat laut maio. Evellesequi
vellabo. Ut maiorib uscidebit, officidel iliqui bea quat estihil
tasped essenis dus dis pero beaqupt aspist as ipsapellisti am a
deritatem runt fugia quis dernatiam quostotae. Ilit utassunt
quos maionsecae mollitas dolorep eribus aut dolore officiam
venis nus aut quidero exceruntquam qui culparum faccabo.
Itati volupta quundam dent eost, odit aliquid et laut qui con`;

const page4 = `sequidi ma volo ex ea que consediam dolorectus num eum
volupta tioruptatur alique nam, cusam, untotat inctota tibus,
vello es alis vent eumquis nonsequi sequi debis aute ra aut
omnimus que pera cus re solupta verum experumqui opta-
tibus magnatur sapist oditior iorehent aliquid quatiis volo-
rea duciatium aligendus am dis as apitibus, aut vel inum el
ilit occabor sed ut as as dolorepelis et dolesed magnimusam
sequiam qui nitin natectotatem que consero debis voluptat
facearume prorpor emporerferum quaspit pratatem fugita
quas quam con remporiam idus, officta temo dios neces rectis
volorita tur? Quia coreperferi necercise nis adipicil mos dolor
sitis es maximagnit, consequ idelest, abo. Tatatemque vent
modistorum ut por mi, sitis nossundebis rem et, a sequatur
moditis tiossni dolorem imagnat qui sitiam non cum quis-
sim agnises daciatorum ex electi ommos eium veris soluptat
alitatenihit iunt liquuntiae nat.¶
Nonseque oditius autem aut od et lab iumet la volore, cus
quam laborio minctus ut et volupta tatatec tatiat, sim ven-
debit ditas et laute sequam fuga. Et ut quias modis doles sit
accum ipsusan imillec aboribus, est vel intem exerchic tem-
quibus.¶
Lut utem ate vellita volestem faceramquo testio dolupti
temporr orations et odist que quatem vid mi, sed qui dolum
voluptate quiuntem harchilleri, corem fugia as rem quistia-
tis erum era derrorumquam lacerfe rempossint dicil in rest
volorem ihilitatur, vent optat es cone re niminctatur, consequi
as es et quam similla pitiatu repedionsed qui cus sin es volo-
reratum audae la voluptus nos ea sita doluptas audis quae laut
ari voluptate pernatio modi omnist ame dolupta tibus, endae
quasi diorem cuptam debit iminiene nossum, te que quaerum-
quo blam non nonsequ untur?¶
Onsequias eum doluptatur aliti volupta tibuscid quo que ped
et quibusa nimil iduciprunte volum res volorio totat late`;

const page5 = `fugiass imaiore pliam laborro dis autae dolestium qui as et,
que corerum a corem. Ur? Quiate secture re vit quiditas aut
labores tiatemis quidem reperci optatem accae et laccum adit
vellore pratem qui officium quati ut et, totae del magnimusam
apiciusam, seditatur, to qui quam, untibusam, voluptatem vo-
lupti ipidunt hicid modi tem a volent.¶
Mos aut aliqui volorep reptur?¶
Officto tatus, conem. Et quae provid et quiamus aurt as si-
tione catium autem qui culliqui nonsedis id exceptat plata-
tatium vel ilit officil maximaxim voluptam, cus modit, ipsae
volorio dolorit, sectemp oreiunt et prepelis pa dus exces ra-
tiberio quatatur? Quidios imo cuscium enditios eium harum
faccabor aut inistia mquiatis eos abo. Moditianda ditatem
eum arum ut dendis porporem dolorit ullorro beata event
ullesec tionsed molorectata cusam dolor aut labori im qua-
me la dolupta teculpa solum velest, nimoluptate cuscips ape-
ruptiasu soluptatem inctaecuptas iliqui aplenda cum reiur,
senis et venim non poruptat a velignam aliquatendae qui tem
haritam aborehentio ex evelitae perchi tionseq uaectintem
eossita solorectur as dolut facepe velest esequas doluptatem
faccus diatisi sinvelis et, qui beaque vel in nocaboreped min-
tiur, coreiur? Quis videl inum harciet ipicitiatiis nim entinim
etusande ditam faccus abori netaribus aliquat de natet aut
quam, utempor sum es porum consequ atibusam nullorem
quatemp oriore soluptatem. Itatur? Biscimo luptatus eum vo-
lorio il in et voluptias nectatq uibusandunt reculli tibusti ac-
catia aut fugitia sin conectotas quae eos a volum laborpostem
faccaep eroviti ipis arum nos cus quid quia ab intis re, seque
vent, qui conseque pre quodigendiam fuga. Ss exceriam non-
sedi omserists doluptat ant harumquamet, simincturi tem et
perioris as quunte int quam inverspicab imendar ovitae il-
labor sin pre pre rem dellignis molupta dis veliquo es eium
volupta quasintia cores as cus eossi rectur, odi quos am, as`;

const Story = ({ text }) => (
  <TextLines>
    {text.split('\n').map((line, i) => {
      const end = line.endsWith('¶');
      return (
        <TextLine key={i} $end={end}>
          {end ? <Fragment>{line.slice(0, -1)}<i>¶</i></Fragment> : line}
        </TextLine>
      );
    })}
  </TextLines>
);

const OutPort = ({ over }) => (
  <Port $out $over={over}>
    <PortMark $over={over} />
  </Port>
);

const Spread = ({ top, numbers, children }) => (
  <Pasteboard $top={top}>
    <PagePair />
    <Spine $top={48} $height={164} />
    <Spine $top={229} $height={156} />
    {[220, 373, 418, 571].map((x) => (
      <Guide key={x} $x={x} />
    ))}
    <Guide />
    <Folio>{numbers[0]}<i>¶</i></Folio>
    <Folio $right>{numbers[1]}<i>¶</i></Folio>
    {children}
  </Pasteboard>
);

const Doc = () => (
  <Canvas>
    <Spread top={35} numbers={[2, 3]}>
      <TextFrame $edges="#4f99ff">
        <Story text={page2} />
      </TextFrame>
      <TextFrame $right $edges="#ff4fff #a040ff #ff4fff #c060ff">
        <Story text={page3} />
      </TextFrame>
    </Spread>
    <Spread top={491} numbers={[4, 5]}>
      <TextFrame $edges="#ff4fff #a040ff">
        <Story text={page4} />
      </TextFrame>
      <TextFrame $right $edges="#ff4fff #a040ff #4f99ff #c060ff">
        <Story text={page5} />
      </TextFrame>
    </Spread>
    <Threads>
      <path d="M765 376L810 141M963 376L612 597M765 832L810 597" />
    </Threads>
    <PortLayer $left={612} $top={131}>
      {[[-3, -3], [73, -3], [150, -3], [-3, 124], [150, 124], [-3, 252], [73, 252], [150, 252]].map(([x, y]) => (
        <Handle key={`${x}-${y}`} $x={x} $y={y} />
      ))}
      <Handle $x={149} $y={20} $fill />
      <Port />
      <OutPort />
    </PortLayer>
    <PortLayer $left={810} $top={131}>
      <Port><PortMark /></Port>
      <OutPort />
    </PortLayer>
    <PortLayer $left={612} $top={587}>
      <Port><PortMark /></Port>
      <OutPort />
    </PortLayer>
    <PortLayer $left={810} $top={587}>
      <Port><PortMark /></Port>
      <OutPort over />
    </PortLayer>
  </Canvas>
);

const ScrollCap = styled.div`
  display: flex;
  align-items: center;
  justify-content: center;
  background: #f0f0f0;
`;

const ScrollTrack = styled.div`
  display: flex;
  flex-direction: column;
  align-items: center;
  justify-content: space-between;
  background: #f0f0f0;
  border-left: 1px solid #fff;
  padding-bottom: 2px;
`;

const ScrollThumb = styled.div`
  width: 100%;
  height: 90%;
  background: #cdcdcd;
`;

const StatusBar = styled.footer`
  grid-column: 1 / -1;
  display: flex;
  align-items: center;
  padding-left: 3px;
  border-top: 1px solid #909090;
  background: #f0f0f0;
`;

const StatusIcons = styled.span`
  display: flex;
  align-items: center;
  gap: ${(p) => p.$gap}px;
  width: ${(p) => p.$w}px;
`;

const PageSelect = styled.span`
  width: 98px;
  margin-right: 5px;
  select {
    height: 15px;
    border: 0;
    padding: 0 1px;
  }
`;

const ErrorDot = styled.span`
  width: 10px;
  height: 10px;
  margin-right: 4px;
  border-radius: 50%;
  background: radial-gradient(#ff4b2b, #d42a10);
`;

const Errors = styled.button`
  display: flex;
  align-items: center;
  justify-content: space-between;
  width: 76px;
  padding: 0;
  border: 0;
  background: none;
`;

const HScroll = styled.span`
  display: flex;
  align-items: center;
  justify-content: space-between;
  flex: 1;
  margin-left: 8px;
  padding: 0 2px 0 3px;
`;

const SplitMark = styled.span`
  display: flex;
  gap: 2px;
  margin: 0 4px;
  &::before,
  &::after {
    content: '';
    width: 6px;
    height: 11px;
    background: linear-gradient(#bbb, #888);
  }
`;

const DocView = () => (
  <DocArea>
    <DocTabs>
      <DocTab>*B-1-CS6.indd @ 50 % <Icon name="close" size={7} /></DocTab>
    </DocTabs>
    <DocGrid>
      <RulerCorner />
      <HRuler />
      <ScrollCap><Icon name="up" size={9} /></ScrollCap>
      <VRuler />
      <Doc />
      <ScrollTrack>
        <ScrollThumb />
        <Icon name="down" size={9} />
      </ScrollTrack>
      <StatusBar>
        <StatusIcons $gap={9} $w={26}>
          <Icon name="first" size={9} />
          <Icon name="prev" size={9} />
        </StatusIcons>
        <PageSelect><Select label="Seite" value="2" /></PageSelect>
        <StatusIcons $gap={6} $w={32}>
          <Icon name="next" size={9} />
          <Icon name="last" size={9} />
        </StatusIcons>
        <StatusIcons $w={24}><Icon name="preflight" size={13} /></StatusIcons>
        <ErrorDot />
        <Errors type="button">1 Fehler <Icon name="caret" size={6} /></Errors>
        <HScroll>
          <Icon name="prevLight" size={9} />
          <Icon name="nextLight" size={9} />
        </HScroll>
        <SplitMark />
        <Icon name="grip" size={12} />
      </StatusBar>
    </DocGrid>
  </DocArea>
);

/* ---------- floating panels ---------- */

const Floating = styled.section`
  position: absolute;
  display: flex;
  flex-direction: column;
  left: ${(p) => p.$left}px;
  top: ${(p) => p.$top}px;
  width: ${(p) => p.$width}px;
  min-height: ${(p) => p.$height}px;
  border: 1px solid #666;
  border-radius: 3px 3px 0 0;
  background: #f0f0f0;
  box-shadow: 0 0 4px rgba(0, 0, 0, 0.35);
`;

const PanelBar = styled.div`
  display: flex;
  align-items: center;
  justify-content: flex-end;
  gap: 9px;
  flex: none;
  height: 13px;
  padding-right: 5px;
  border-bottom: 1px solid #777;
  border-radius: 2px 2px 0 0;
  background: linear-gradient(#a6a6a6, #8f8f8f);
`;

const Panel = ({ title, plain, children, ...box }) => (
  <Floating {...box}>
    <PanelBar>
      <Icon name="collapse" size={8} />
      <Icon name="close" size={7} />
    </PanelBar>
    <Tabs title={title} plain={plain} />
    {children}
  </Floating>
);

const LiquidBody = styled.div`
  padding: 0 6px 0 4px;
  color: ${(p) => (p.$dim ? '#6c6c6c' : '#000')};
`;

const LiquidRow = styled.div`
  display: flex;
  align-items: center;
  justify-content: ${(p) => (p.$spread ? 'space-between' : 'flex-start')};
  height: ${(p) => p.$h}px;
  padding-left: ${(p) => p.$indent || 0}px;
`;

const Rule = styled.hr`
  margin: 4px 0 0;
  border: solid #999;
  border-width: 1px 0 0;
`;

const Check = styled.label`
  display: flex;
  align-items: center;
  gap: 3px;
  width: ${(p) => (p.$w ? `${p.$w}px` : 'auto')};
  color: #6c6c6c;
  input {
    appearance: none;
    width: 13px;
    height: 13px;
    border: 1px solid #c4c4c4;
    background: #fff;
  }
`;

const CheckBox = ({ label, w }) => (
  <Check $w={w}>
    <input type="checkbox" />
    {label}
  </Check>
);

const LiquidPanel = () => (
  <Panel title="Liquid Layout" plain $left={179} $top={312} $width={209} $height={243}>
    <LiquidBody>
      <LiquidRow $h={20} $spread>
        <span>Liquid-Seiten-Regel:</span>
        <span>Seite: 2</span>
      </LiquidRow>
      <LiquidRow $h={18} $spread>
        <Select w={177} label="Liquid-Seiten-Regel" value="Gesteuert durch Musterseite" />
        <Icon name="warn" size={16} />
      </LiquidRow>
      <Rule />
      <LiquidRow $h={22}>Inhalt:</LiquidRow>
      <LiquidRow $h={14}><CheckBox label="Automatisch einpassen" /></LiquidRow>
      <Rule />
    </LiquidBody>
    <LiquidBody $dim>
      <LiquidRow $h={24}>Objektbeschränkungen:</LiquidRow>
      <LiquidRow $h={16} $indent={6}>Größe mit Seite ändern:</LiquidRow>
      <LiquidRow $h={20} $indent={11}>
        <CheckBox label="Höhe" w={95} />
        <CheckBox label="Breite" />
      </LiquidRow>
      <LiquidRow $h={20} $indent={6}>Verankerung:</LiquidRow>
      <LiquidRow $h={16} $indent={11}>
        <CheckBox label="Oben" w={95} />
        <CheckBox label="Links" />
      </LiquidRow>
      <LiquidRow $h={24} $indent={11}>
        <CheckBox label="Unten" w={95} />
        <CheckBox label="Rechts" />
      </LiquidRow>
    </LiquidBody>
  </Panel>
);

const Scrollable = styled.div`
  display: flex;
  flex: ${(p) => (p.$height ? 'none' : 1)};
  height: ${(p) => (p.$height ? `${p.$height}px` : 'auto')};
`;

const ScrollMain = styled.div`
  flex: 1;
  min-width: 0;
  padding-top: ${(p) => p.$pad || 0}px;
`;

const SideScroll = styled.div`
  display: flex;
  flex-direction: column;
  align-items: center;
  justify-content: space-between;
  width: 15px;
  padding: 7px 0 3px;
  border-left: 1px solid #fff;
`;

const LayerRow = styled.div`
  display: flex;
  align-items: center;
  height: 19px;
  padding-left: 2px;
  border-bottom: 1px solid #fff;
`;

const LayerBox = styled.span`
  width: 12px;
  height: 14px;
  margin: 0 4px 0 8px;
  border: 1px solid #b0b0b0;
  border-width: 1px 0 0 1px;
`;

const LayerColor = styled.span`
  width: 5px;
  height: 16px;
  border: solid #4f99ff;
  border-width: 0 0 0 3px;
`;

const LayerName = styled.span`
  display: flex;
  align-items: center;
  gap: 2px;
  flex: 1;
  height: 19px;
  padding-left: ${(p) => (p.$child ? 24 : 1)}px;
  border-left: 1px solid #000;
  white-space: nowrap;
`;

const LayerSquare = styled.span`
  width: 7px;
  height: 7px;
  margin: 0 6px 0 5px;
  border: 1px solid ${(p) => (p.$on ? '#000' : '#b0b0b0')};
  background: ${(p) => (p.$on ? '#4f99ff' : 'none')};
`;

const Layer = ({ name, child, active, on }) => (
  <LayerRow>
    <Icon name="eye" size={12} />
    <LayerBox />
    <LayerColor />
    <LayerName $child={child}>
      {!child && <Icon name="triangle" size={10} />}
      {name}
    </LayerName>
    {active && <Icon name="nib" size={12} />}
    <LayerSquare $on={on} />
  </LayerRow>
);

const PanelFooter = styled.footer`
  display: flex;
  align-items: center;
  flex: none;
  height: 17px;
  padding: 0 1px 0 ${(p) => p.$pad}px;
  border-top: 1px solid #888;
`;

const FooterText = styled.span`
  flex: 1;
  overflow: hidden;
  white-space: nowrap;
`;

const FooterActions = styled.span`
  display: flex;
  align-items: center;
  gap: ${(p) => p.$gap}px;
  margin-left: 7px;
`;

const PanelGrip = styled.div`
  display: flex;
  align-items: center;
  justify-content: center;
  flex: none;
  height: 8px;
  border-top: 1px solid #666;
`;

const LayersPanel = () => (
  <Panel title="Ebenen" $left={1350} $top={306} $width={241} $height={528}>
    <Scrollable>
      <ScrollMain $pad={1}>
        <Layer name="Ebene 1" active on />
        <Layer name="<Hit et arum et ...o ipsunti bu...>" child />
        <Layer name="<Temporia volore...tibus est, ...>" child on />
      </ScrollMain>
      <SideScroll>
        <Icon name="up" size={9} />
        <Icon name="down" size={9} />
      </SideScroll>
    </Scrollable>
    <PanelFooter $pad={4}>
      <FooterText>Seiten: 2-3, 1 Ebene</FooterText>
      <FooterActions $gap={15}>
        <Tool name="newItem" size={11} w={14} h={14} />
        <Tool name="trash" size={12} w={14} h={14} dim />
        <Icon name="grip" size={11} />
      </FooterActions>
    </PanelFooter>
    <PanelGrip><DragDots $flat /></PanelGrip>
  </Panel>
);

const MasterRow = styled.div`
  display: flex;
  align-items: center;
  justify-content: space-between;
  height: 29px;
  padding: 0 9px 0 3px;
`;

const MasterPages = styled.span`
  display: flex;
  span {
    width: 14px;
    height: 24px;
    border: 1px solid #000;
    background: #fff;
  }
  span + span {
    border-left: 0;
  }
`;

const Splitter = styled.div`
  flex: none;
  height: 5px;
  border: solid #666;
  border-width: 1px 0;
  background: #f6f6f6;
`;

const SpreadItem = styled.div`
  position: relative;
  display: flex;
  flex-direction: column;
  align-items: center;
  padding-top: 6px;
  height: 64px;
  &::before {
    content: '';
    position: absolute;
    left: 97px;
    top: 0;
    width: 1px;
    height: 48px;
    background: #000;
    z-index: 1;
  }
`;

const Thumb = styled.span`
  display: flex;
  justify-content: space-between;
  width: 41px;
  height: 36px;
  border: 1px solid #000;
  background: #fff;
`;

const ThumbPage = styled.span`
  display: flex;
  flex: 1;
  align-items: flex-start;
  justify-content: ${(p) => (p.$right ? 'flex-end' : 'flex-start')};
  border: solid ${(p) => (p.$blue ? '#7db7ee' : '#fff')};
  border-width: 4px 1px 3px;
  background: ${(p) => (p.$blue ? '#3470a2' : '#666')};
  span {
    width: 7px;
    height: 9px;
    margin-top: -4px;
    background: #fff;
    font-size: 8px;
    line-height: 9px;
    font-weight: ${(p) => (p.$blue ? 700 : 400)};
    text-align: center;
  }
`;

const SpreadLabel = styled.span`
  z-index: 2;
  margin-top: 5px;
  padding: 0 3px;
  line-height: 12px;
  background: ${(p) => (p.$on ? '#000' : 'none')};
  color: ${(p) => (p.$on ? '#fff' : '#000')};
  font-size: 10px;
  font-weight: ${(p) => (p.$on ? 700 : 400)};
`;

const Marker = styled.span`
  position: absolute;
  left: 83px;
  top: 0;
  border: 5px solid transparent;
  border-top-color: #000;
  border-bottom: 0;
`;

const PagesPanel = () => (
  <Panel title="Seiten" $left={1607} $top={304} $width={209} $height={528}>
    <Scrollable $height={117}>
      <ScrollMain $pad={3}>
        <MasterRow>[Ohne] <MasterPages><span /></MasterPages></MasterRow>
        <MasterRow>A-Master <MasterPages><span /><span /></MasterPages></MasterRow>
      </ScrollMain>
      <SideScroll>
        <Icon name="up" size={9} />
        <Icon name="down" size={9} />
      </SideScroll>
    </Scrollable>
    <Splitter />
    <Scrollable>
      <ScrollMain $pad={1}>
        <SpreadItem>
          <Marker />
          <Thumb>
            <ThumbPage><span>A</span></ThumbPage>
            <ThumbPage $right $blue><span>A</span></ThumbPage>
          </Thumb>
          <SpreadLabel $on>2-3</SpreadLabel>
        </SpreadItem>
        <SpreadItem>
          <Thumb>
            <ThumbPage><span>A</span></ThumbPage>
            <ThumbPage $right><span>A</span></ThumbPage>
          </Thumb>
          <SpreadLabel>4-5</SpreadLabel>
        </SpreadItem>
      </ScrollMain>
      <SideScroll>
        <Icon name="up" size={9} />
        <Icon name="down" size={9} />
      </SideScroll>
    </Scrollable>
    <PanelFooter $pad={3}>
      <FooterText>4 Seiten auf 2 Druckbögen</FooterText>
      <FooterActions $gap={14}>
        <Tool name="pageSize" size={13} w={16} h={14} />
        <Tool name="newItem" size={11} w={14} h={14} />
        <Tool name="trash" size={12} w={14} h={14} />
        <Icon name="grip" size={11} />
      </FooterActions>
    </PanelFooter>
    <PanelGrip><DragDots $flat /></PanelGrip>
  </Panel>
);

const Defs = () => (
  <svg width="0" height="0" style={{ position: 'absolute' }} aria-hidden="true">
    <defs>
      <linearGradient id="gradH">
        <stop offset="0" stopColor="#333" />
        <stop offset="1" stopColor="#f4f4f4" />
      </linearGradient>
      <linearGradient id="gradV" x2="0" y2="1">
        <stop offset="0" stopColor="#f4f4f4" />
        <stop offset="1" stopColor="#444" />
      </linearGradient>
    </defs>
  </svg>
);

export default () => (
  <Shell>
    <GlobalStyle />
    <Defs />
    <Header />
    <Controls />
    <Body>
      <LeftDock />
      <DocView />
    </Body>
    <LiquidPanel />
    <LayersPanel />
    <PagesPanel />
  </Shell>
);
